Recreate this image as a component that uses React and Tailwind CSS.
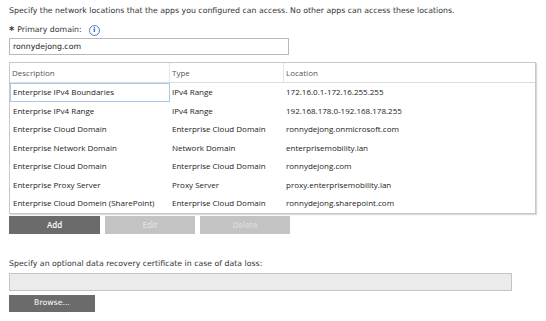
import React from "react";

const rows = [
  ["Enterprise IPv4 Boundaries", "IPv4 Range", "172.16.0.1-172.16.255.255"],
  ["Enterprise IPv4 Range", "IPv4 Range", "192.168.178.0-192.168.178.255"],
  ["Enterprise Cloud Domain", "Enterprise Cloud Domain", "ronnydejong.onmicrosoft.com"],
  ["Enterprise Network Domain", "Network Domain", "enterprisemobility.lan"],
  ["Enterprise Cloud Domain", "Enterprise Cloud Domain", "ronnydejong.com"],
  ["Enterprise Proxy Server", "Proxy Server", "proxy.enterprisemobility.lan"],
  ["Enterprise Cloud Domein (SharePoint)", "Enterprise Cloud Domain", "ronnydejong.sharepoint.com"],
];

const verd = { fontFamily: '"DejaVu Sans", Verdana, sans-serif' };
const segoe = { fontFamily: '"Open Sans", "Noto Sans", sans-serif' };

export default function App() {
  return (
    <div className="w-[546px] h-[321px] bg-white overflow-hidden pl-[9px] pt-[5px] text-[#222]">
      <div className="text-[7.8px] leading-[11px] text-[#333]" style={verd}>
        Specify the network locations that the apps you configured can access. No other apps can access these locations.
      </div>
      <div className="flex items-center mt-[7px] h-[14px] text-[7.8px] text-[#333]" style={verd}>
        <span className="text-[10px] font-bold leading-none mr-[3px] relative top-[1px]">*</span>
        <span>Primary domain:</span>
        <span className="ml-[7px] w-[11px] h-[11px] rounded-full border border-[#4a7fd0] text-[#2f5fb0] flex items-center justify-center text-[7px] font-bold leading-none">i</span>
      </div>
      <div className="mt-[1px] w-[280px] h-[17px] border border-[#b8b8b8] flex items-center pl-[3px] text-[7.8px] text-[#222]" style={verd}>
        ronnydejong.com
      </div>
      <div className="mt-[7px] w-[527px] border border-[#c8c8c8] shadow-[1px_1px_1px_rgba(0,0,0,0.15)] text-[8px]" style={segoe}>
        <div className="flex h-[20px] border-b border-[#dcdcdc] text-[#555] items-center">
          <div className="w-[160px] pl-[2px] border-r border-[#e4e4e4] h-full flex items-center">Description</div>
          <div className="w-[114px] pl-[2px] border-r border-[#e4e4e4] h-full flex items-center">Type</div>
          <div className="flex-1 pl-[2px] h-full flex items-center">Location</div>
        </div>
        {rows.map((r, i) => (
          <div key={i} className="flex h-[18.5px] items-center text-[#222]">
            <div className={"w-[160px] pl-[2px] h-full flex items-center " + (i === 0 ? "border border-[#a9c9ea]" : "border border-transparent")}>{r[0]}</div>
            <div className="w-[114px] pl-[2px] h-full flex items-center">{r[1]}</div>
            <div className="flex-1 pl-[2px] h-full flex items-center">{r[2]}</div>
          </div>
        ))}
      </div>
      <div className="flex gap-[5px] mt-[2px] text-[8px] font-semibold" style={segoe}>
        <div className="w-[91px] h-[18px] bg-[#6b6b6b] text-white flex items-center justify-center">Add</div>
        <div className="w-[90px] h-[18px] bg-[#c3c3c3] text-[#e0e0e0] flex items-center justify-center">Edit</div>
        <div className="w-[90px] h-[18px] bg-[#c3c3c3] text-[#dadada] flex items-center justify-center">Delete</div>
      </div>
      <div className="mt-[24px] text-[7.8px] leading-[11px] text-[#333]" style={verd}>
        Specify an optional data recovery certificate in case of data loss:
      </div>
      <div className="mt-[4px] w-[503px] h-[18px] bg-[#ebebeb] border border-[#c4c4c4]"></div>
      <div className="mt-[4px] w-[86px] h-[17px] bg-[#6b6b6b] text-white flex items-center justify-center text-[7.8px]" style={verd}>
        Browse...
      </div>
    </div>
  );
}
